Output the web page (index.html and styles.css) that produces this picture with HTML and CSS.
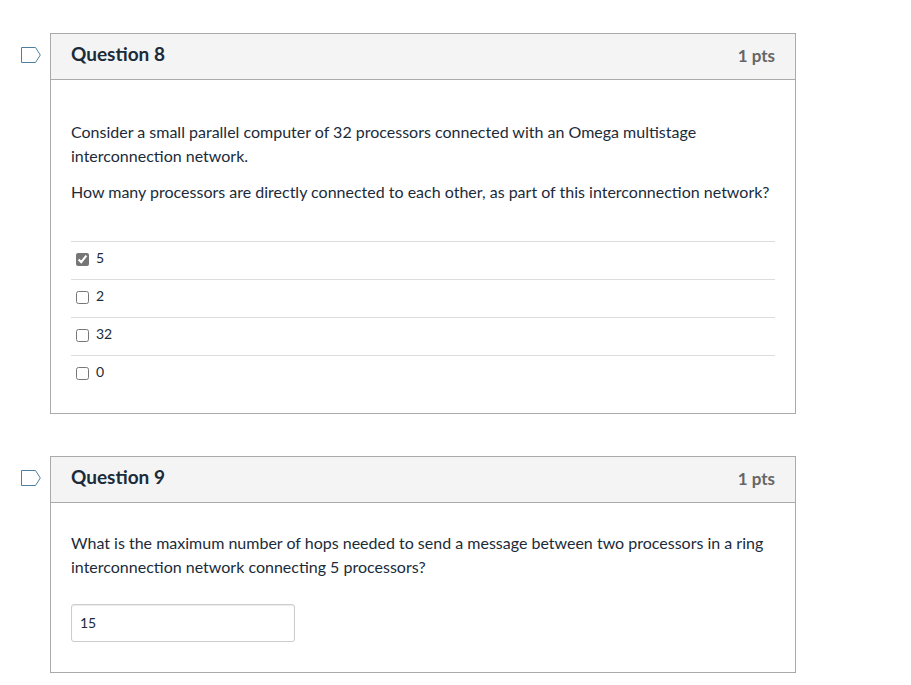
FILE: index.html
```html
<!DOCTYPE html>
<html lang="en">
<head>
  <meta charset="UTF-8">
  <title>Quiz</title>
  <meta name="viewport" content="width=device-width, initial-scale=1.0">
  <link rel="stylesheet" href="styles.css">
</head>
<body>
  <main class="quiz">
    <div class="question-row">
      <button class="flag" type="button" aria-label="Flag question 8">
        <svg width="21" height="18" viewBox="0 0 21 18"><path d="M1.5 1.5H15.5L20.3 9L15.5 16.5H1.5Z"/></svg>
      </button>
      <section class="question">
        <header class="question-header">
          <h2>Question 8</h2>
          <span class="points">1 pts</span>
        </header>
        <div class="question-body question-body-choice">
          <div class="question-text">
            <p>Consider a small parallel computer of 32 processors connected with an Omega multistage interconnection network.</p>
            <p>How many processors are directly connected to each other, as part of this interconnection network?</p>
          </div>
          <div class="answers">
            <label class="answer"><input type="checkbox" checked><span>5</span></label>
            <label class="answer"><input type="checkbox"><span>2</span></label>
            <label class="answer"><input type="checkbox"><span>32</span></label>
            <label class="answer"><input type="checkbox"><span>0</span></label>
          </div>
        </div>
      </section>
    </div>

    <div class="question-row">
      <button class="flag" type="button" aria-label="Flag question 9">
        <svg width="21" height="18" viewBox="0 0 21 18"><path d="M1.5 1.5H15.5L20.3 9L15.5 16.5H1.5Z"/></svg>
      </button>
      <section class="question">
        <header class="question-header">
          <h2>Question 9</h2>
          <span class="points">1 pts</span>
        </header>
        <div class="question-body">
          <div class="question-text">
            <p id="q9-text">What is the maximum number of hops needed to send a message between two processors in a ring interconnection network connecting 5 processors?</p>
          </div>
          <input class="answer-input" type="text" value="15" aria-labelledby="q9-text">
        </div>
      </section>
    </div>
  </main>
</body>
</html>
```

FILE: styles.css
```css
* {
  box-sizing: border-box;
}
body {
  margin: 0;
  background: #fff;
  color: #1b2b3a;
  font-family: Lato, "Liberation Sans", sans-serif;
  font-size: 16px;
  line-height: 24px;
}
.quiz {
  display: flex;
  flex-direction: column;
  gap: 42px;
  max-width: 911px;
  padding: 33px 115px 12px 20px;
}
.question-row {
  display: flex;
  align-items: flex-start;
  gap: 9px;
}
.flag {
  display: flex;
  margin: 13px 0 0;
  padding: 0;
  border: none;
  background: none;
  cursor: pointer;
}
.flag path {
  fill: none;
  stroke: #4f7f9f;
}
.question {
  flex: 1;
  min-width: 0;
  border: 1px solid #aaa;
}
.question-header {
  display: flex;
  justify-content: space-between;
  height: 46px;
  padding: 8px 20px;
  background: #f4f4f4;
  border-bottom: 1px solid #aaa;
}
.question-header h2 {
  margin: 0;
  font-size: 19px;
  font-weight: 700;
}
.points {
  padding-top: 2px;
  color: #666;
  font-size: 17px;
  font-weight: 700;
}
.question-body {
  padding: 28px 20px 30px;
}
.question-body-choice {
  padding-top: 40px;
  padding-bottom: 20px;
}
.question-text p {
  margin: 0 0 12px;
}
.answers {
  margin-top: 37px;
}
.answer {
  display: flex;
  align-items: flex-start;
  gap: 7px;
  height: 38px;
  padding: 4px 5px 0;
  border-top: 1px solid #ddd;
  font-size: 14px;
}
.answer input {
  width: 13px;
  height: 13px;
  margin: 7px 0 0;
  accent-color: #767676;
}
.answer-input {
  display: block;
  width: 224px;
  height: 38px;
  margin-top: 25px;
  padding: 0 8px 2px;
  border: 1px solid #ccc;
  border-radius: 3px;
  box-shadow: inset 0 1px 1px rgba(0,0,0,0.08);
  color: #1b2b3a;
  font-family: inherit;
  font-size: 14px;
}
```
